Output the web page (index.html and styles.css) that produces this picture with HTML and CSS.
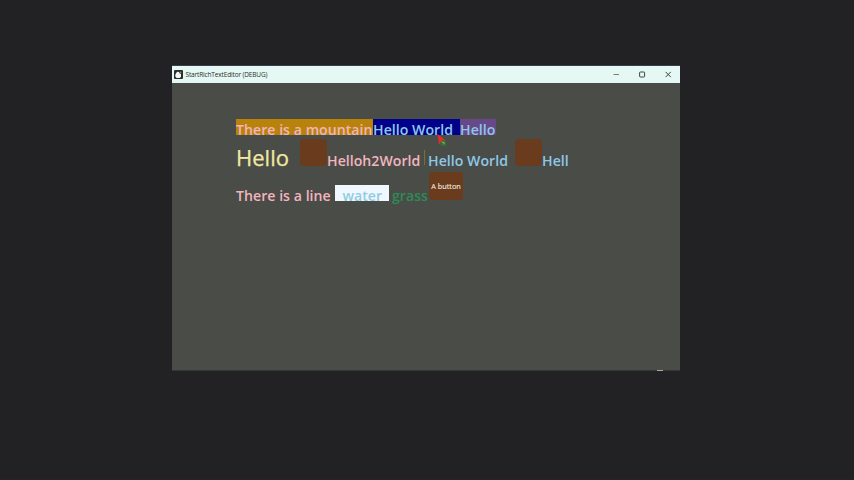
FILE: index.html
```html
<!DOCTYPE html>
<html lang="en">
<head>
<meta charset="utf-8">
<title>StartRichTextEditor (DEBUG)</title>
<link rel="stylesheet" href="styles.css">
</head>
<body>
<main class="window">
  <header class="titlebar">
    <svg class="logo" width="9" height="9" viewBox="0 0 9 9"><rect width="9" height="9" rx="1" fill="#292c32"/><path d="M2 3.3 3.2 1.8 5 2 5.5 3.3 7 4V7L5.5 8H2.6L1.3 6.6V4.7Z" fill="#f1f7f3"/><path d="M5.8 1.6h1.5v1.6H5.8z" fill="#79a43b"/></svg>
    <h1 class="title">StartRichTextEditor (DEBUG)</h1>
    <svg class="controls" width="64" height="12" viewBox="0 0 64 12" fill="none" stroke="#384642" stroke-width="1"><path d="M5.5 5.5H11" stroke="#71807b"/><rect x="31.6" y="3" width="5" height="5" rx=".7"/><path d="M57.6 2.9 62.8 8.1M62.8 2.9 57.6 8.1"/></svg>
  </header>
  <section class="editor">
    <div class="row first">
      <span class="run mountain pink">There is a mountain</span>
      <span class="run navy sky">Hello World</span>
      <span class="run purple sky">Hello</span>
    </div>
    <div class="row second">
      <span class="run big">Hello</span>
      <span class="tile"></span>
      <span class="run pink h2">Helloh2World</span>
      <span class="caret"></span>
      <span class="run sky world">Hello World</span>
      <span class="tile"></span>
      <span class="run sky">Hell</span>
    </div>
    <div class="row third">
      <span class="run pink line">There is a line</span>
      <span class="run water">water</span>
      <span class="run grass">grass</span>
      <button class="button">A button</button>
    </div>
  </section>
  <svg class="pointer" width="12" height="14" viewBox="0 0 12 14"><path d="M.5 0 8.5 6.5 5 7.5 2 10.5Z" fill="#e62b2b"/><path d="m3.2 8 2.2-1.8 4 .9-1 2 1 2.4-1.8 1-1.7-1.8-1.7 1.8Z" fill="#2e7535"/><path d="m4.8 8 2.8 1-1.2 1.3" fill="none" stroke="#83bd51"/></svg>
  <span class="speck"></span>
</main>
</body>
</html>
```
FILE: styles.css
```css
* { box-sizing: border-box; }
body {
  margin: 0;
  height: 480px;
  overflow: hidden;
  padding: 65px 0 0 172px;
  background: #222224;
  border-bottom: 1px solid #2b2024;
  font-family: "Open Sans", sans-serif;
}
.window {
  position: relative;
  width: 508px;
  height: 306px;
  background: #4a4c48;
  border-top: 1px solid #37404a;
  border-bottom: 1px solid #30363a;
}
.titlebar {
  display: flex;
  align-items: center;
  height: 17px;
  padding: 0 8px 0 2px;
  background: #e6f8f3;
}
.logo { display: block; margin-right: 2.5px; }
.title {
  margin: 0;
  color: #26302e;
  font: 400 6.5px/12px "Open Sans", sans-serif;
  letter-spacing: -0.15px;
  white-space: nowrap;
}
.controls { margin-left: auto; }
.editor { padding: 36px 0 0 64px; }
.row { display: flex; }
.run {
  flex: none;
  font-size: 14.1px;
  font-weight: 600;
  letter-spacing: 0.04px;
  line-height: 21px;
  white-space: pre;
}
.first .run { height: 16px; }
.mountain { width: 137px; background: #b9830b; }
.navy { width: 87px; background: #00008b; }
.purple { width: 36px; background: #67498a; }
.pink { color: #f2b5bf; }
.sky { color: #8dc8e6; }
.second { height: 31px; margin-top: 4px; }
.second .run { padding-top: 11px; }
.second .big {
  width: 64px;
  padding-top: 0;
  color: #f1e9a3;
  font-size: 22px;
  font-weight: 400;
  line-height: 37px;
  letter-spacing: 0;
  -webkit-text-stroke: 0.25px;
}
.tile {
  flex: none;
  width: 27px;
  height: 27px;
  border-radius: 4px;
  background: #6b3b1d;
}
.h2 { width: 97px; }
.caret { width: 1px; height: 15px; margin: 11px 3px 0 0; background: #77712e; }
.world { width: 87px; }
.third { height: 32px; margin-top: 2px; }
.third .run { height: 15.5px; margin-top: 13px; }
.line { width: 98.5px; }
.water { width: 54.5px; padding-left: 8px; color: #91cce2; background: #f0f8ff; }
.grass { width: 40px; padding-left: 3px; color: #2e8b57; }
.button {
  width: 34px;
  height: 28px;
  padding: 0;
  border: 0;
  border-radius: 4px;
  background: #6b3b1d;
  color: #eee5df;
  font: 400 7.3px/28px "Open Sans", sans-serif;
  -webkit-text-stroke: 0.15px;
  white-space: nowrap;
}
.pointer { position: absolute; left: 265px; top: 68px; }
.speck { position: absolute; left: 485px; top: 304px; width: 6px; height: 1px; background: #aaa99b; }
```
